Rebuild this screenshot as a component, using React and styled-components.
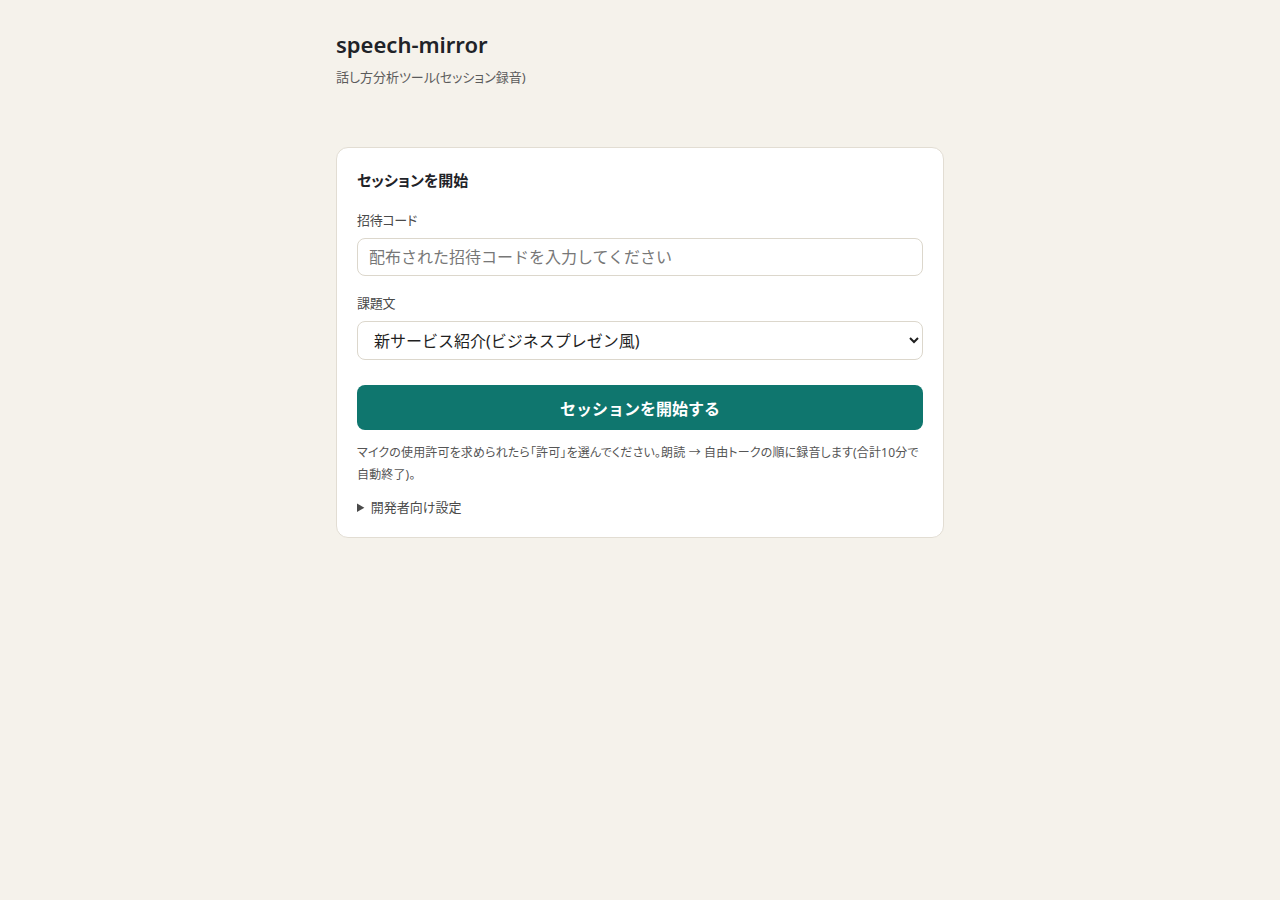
import styled, { createGlobalStyle } from "styled-components";

const GlobalStyle = createGlobalStyle`
  body {
    margin: 0;
    background: #f5f2eb;
    font-family: "Noto Sans", "Noto Sans CJK JP", sans-serif;
    color: #1f2328;
  }
`;

const Page = styled.main`
  width: 608px;
  margin: 0 auto;
  padding-top: 29px;
`;

const Header = styled.header`
  margin-bottom: 60px;
`;

const Title = styled.h1`
  margin: 0;
  font-size: 22px;
  line-height: 30px;
  font-weight: 600;
  color: #1f2328;
`;

const Subtitle = styled.p`
  margin: 8px 0 0;
  font-size: 13px;
  line-height: 20px;
  color: #5b5b5b;
  font-feature-settings: "palt";
`;

const Card = styled.section`
  background: #fff;
  border: 1px solid #e2ddd3;
  border-radius: 12px;
  padding: 20px;
`;

const CardTitle = styled.h2`
  margin: 0 0 18px;
  font-size: 15px;
  line-height: 24px;
  font-weight: 700;
  font-feature-settings: "palt";
`;

const Field = styled.div`
  display: flex;
  flex-direction: column;
  gap: 8px;
  margin-bottom: ${(p) => p.$gap || 17}px;
`;

const Label = styled.label`
  font-size: 13px;
  line-height: 20px;
  color: #4a4a4a;
  font-feature-settings: "palt";
  letter-spacing: -0.3px;
`;

const Input = styled.input`
  height: 38px;
  box-sizing: border-box;
  border: 1px solid #dcd7cc;
  border-radius: 8px;
  padding: 0 11px;
  font-family: inherit;
  font-size: 16px;
  color: #222;
  background: #fff;

  &::placeholder {
    color: #777;
  }
`;

const Select = styled.select`
  height: 39px;
  box-sizing: border-box;
  border: 1px solid #dcd7cc;
  border-radius: 8px;
  padding: 0 8px 0 12px;
  font-family: inherit;
  font-size: 16px;
  color: #1f1f1f;
  background: #fff;
`;

const StartButton = styled.button`
  width: 100%;
  height: 45px;
  border: none;
  border-radius: 8px;
  background: #0f766e;
  color: #fff;
  font-family: inherit;
  font-size: 16px;
  font-weight: 700;
  cursor: pointer;
`;

const Note = styled.p`
  margin: 12px 0 11px;
  font-size: 12px;
  line-height: 22px;
  color: #555;
  font-feature-settings: "palt";
  letter-spacing: 0.15px;
`;

const Details = styled.details`
  font-size: 13px;
  line-height: 20px;
  color: #4a4a4a;
  font-feature-settings: "palt";

  summary {
    cursor: pointer;
  }
`;

export default function App() {
  return (
    <>
      <GlobalStyle />
      <Page>
        <Header>
          <Title>speech-mirror</Title>
          <Subtitle>話し方分析ツール(セッション録音)</Subtitle>
        </Header>
        <Card>
          <CardTitle>セッションを開始</CardTitle>
          <Field>
            <Label htmlFor="code">招待コード</Label>
            <Input id="code" placeholder="配布された招待コードを入力してください" />
          </Field>
          <Field $gap={25}>
            <Label htmlFor="topic">課題文</Label>
            <Select id="topic" defaultValue="biz">
              <option value="biz">新サービス紹介(ビジネスプレゼン風)</option>
            </Select>
          </Field>
          <StartButton>セッションを開始する</StartButton>
          <Note>
            マイクの使用許可を求められたら「許可」を選んでください。朗読 → 自由トークの順に録音します(合計10分で自動終了)。
          </Note>
          <Details>
            <summary>開発者向け設定</summary>
          </Details>
        </Card>
      </Page>
    </>
  );
}
